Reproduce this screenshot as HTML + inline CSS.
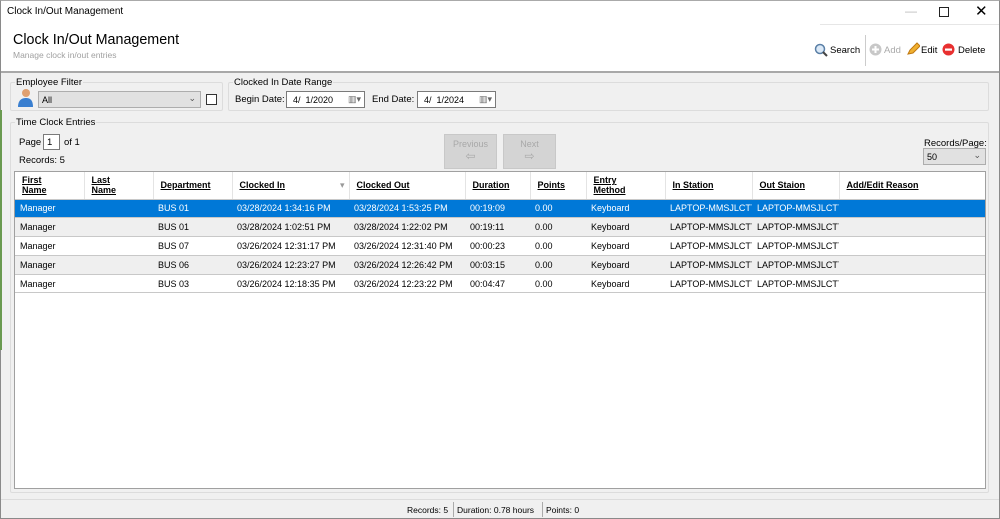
<!DOCTYPE html><html><head><style>
*{box-sizing:border-box;margin:0;padding:0}
body{width:1000px;height:519px;overflow:hidden;font-family:"Liberation Sans",sans-serif;font-size:9.5px;color:#000;background:#f0f0f0;position:relative}
.a{position:absolute}
.win{left:0;top:0;width:1000px;height:519px;border:1px solid #8a8a8a;border-top:1px solid #aaa}
.grp{border:1px solid #dcdcdc;border-radius:2px}
.lbl{font-size:9.5px;background:#f0f0f0;padding:0 1px}
table{border-collapse:collapse;table-layout:fixed;width:970px}
td{height:18.8px;padding:0 0 0 5px;white-space:nowrap;overflow:hidden;font-size:9px;border-bottom:1px solid #c8c8c8}
th{height:27px;text-align:left;font-size:9px;font-weight:bold;text-decoration:underline;padding:0 0 0 7px;border-right:1px solid #e4e4e4;border-bottom:1px solid #c8c8c8;line-height:10px;vertical-align:middle}
tr.s td{background:#0078d7;color:#fff}
tr.g td{background:#efefef}
.btn{background:#d4d4d4;border:1px solid #c8c8c8;color:#a8a8a8;font-size:9px;text-align:center}
</style></head><body>
<div class="a" style="left:0;top:0;width:1000px;height:72px;background:#fff"></div>
<div class="a" style="left:0;top:71px;width:1000px;height:2px;background:#a8a8a8"></div>
<div class="a" style="left:820px;top:24px;width:180px;height:1px;background:#e6e6e6"></div>
<div class="a" style="left:7px;top:6px;font-size:10px">Clock In/Out Management</div>
<div class="a" style="left:905px;top:4px;color:#bbb;font-size:12px">—</div>
<div class="a" style="left:939px;top:7px;width:10px;height:10px;border:1px solid #222"></div>
<div class="a" style="left:975px;top:2px;font-size:15px">✕</div>
<div class="a" style="left:13px;top:32px;font-size:14.3px">Clock In/Out Management</div>
<div class="a" style="left:13px;top:50px;font-size:8.5px;color:#a0a0a0">Manage clock in/out entries</div>
<svg class="a" style="left:814px;top:43px" width="14" height="14"><circle cx="6" cy="6" r="4.5" fill="#dbe9f7" stroke="#5a7fa6" stroke-width="1.5"/><path d="M9 9l4 4" stroke="#444" stroke-width="2"/></svg>
<div class="a" style="left:830px;top:45px;font-size:9.5px">Search</div>
<div class="a" style="left:865px;top:35px;width:1px;height:31px;background:#ccc"></div>
<svg class="a" style="left:869px;top:43px" width="13" height="13"><circle cx="6.5" cy="6.5" r="6" fill="#c8c8c8"/><path d="M6.5 3v7M3 6.5h7" stroke="#fff" stroke-width="2"/></svg>
<div class="a" style="left:884px;top:45px;font-size:9.5px;color:#aaa">Add</div>
<svg class="a" style="left:906px;top:42px" width="14" height="14"><path d="M2 12l2-4 7-7 3 3-7 7z" fill="#f0b030" stroke="#c07810"/></svg>
<div class="a" style="left:921px;top:45px;font-size:9.5px">Edit</div>
<svg class="a" style="left:942px;top:43px" width="13" height="13"><circle cx="6.5" cy="6.5" r="6" fill="#e83030"/><rect x="3" y="5.5" width="7" height="2.2" fill="#fff"/></svg>
<div class="a" style="left:958px;top:45px;font-size:9.5px">Delete</div>

<div class="a grp" style="left:10px;top:82px;width:213px;height:29px"></div>
<div class="a lbl" style="left:15px;top:77px">Employee Filter</div>
<svg class="a" style="left:15px;top:88px" width="20" height="20"><circle cx="11" cy="5" r="4" fill="#e0a070"/><path d="M3 19c0-7 4-9 8-9s7 2 7 9z" fill="#3a7fd0"/></svg>
<div class="a" style="left:38px;top:91px;width:163px;height:17px;background:#e1e1e1;border:1px solid #adadad;padding:3px 3px;font-size:9px">All<span style="position:absolute;right:4px;top:1px;color:#555">⌄</span></div>
<div class="a" style="left:206px;top:94px;width:11px;height:11px;border:1px solid #333;background:#fff"></div>

<div class="a grp" style="left:228px;top:82px;width:761px;height:29px"></div>
<div class="a lbl" style="left:233px;top:77px">Clocked In Date Range</div>
<div class="a" style="left:235px;top:94px">Begin Date:</div>
<div class="a" style="left:286px;top:91px;width:79px;height:17px;background:#fff;border:1px solid #7a7a7a;padding:3px 6px;font-size:9px">4/&nbsp; 1/2020<span style="position:absolute;right:3px;top:2px;color:#666">▥▾</span></div>
<div class="a" style="left:372px;top:94px">End Date:</div>
<div class="a" style="left:417px;top:91px;width:79px;height:17px;background:#fff;border:1px solid #7a7a7a;padding:3px 6px;font-size:9px">4/&nbsp; 1/2024<span style="position:absolute;right:3px;top:2px;color:#666">▥▾</span></div>

<div class="a grp" style="left:10px;top:122px;width:979px;height:371px"></div>
<div class="a lbl" style="left:15px;top:117px">Time Clock Entries</div>
<div class="a" style="left:19px;top:137px">Page</div>
<div class="a" style="left:43px;top:134px;width:17px;height:16px;background:#fff;border:1px solid #7a7a7a;padding:2px 3px">1</div>
<div class="a" style="left:64px;top:137px">of 1</div>
<div class="a" style="left:19px;top:155px">Records: 5</div>
<div class="a btn" style="left:444px;top:134px;width:53px;height:35px;padding-top:4px">Previous<br><span style="font-size:12px">⇦</span></div>
<div class="a btn" style="left:503px;top:134px;width:53px;height:35px;padding-top:4px">Next<br><span style="font-size:12px">⇨</span></div>
<div class="a" style="left:924px;top:138px">Records/Page:</div>
<div class="a" style="left:923px;top:148px;width:63px;height:17px;background:#e1e1e1;border:1px solid #adadad;padding:3px 3px;font-size:9px">50<span style="position:absolute;right:4px;top:1px;color:#555">⌄</span></div>

<div class="a" style="left:14px;top:171px;width:972px;height:318px;background:#fff;border:1px solid #a0a0a0">
<table>
<colgroup><col style="width:69px"><col style="width:69px"><col style="width:79px"><col style="width:117px"><col style="width:116px"><col style="width:65px"><col style="width:56px"><col style="width:79px"><col style="width:87px"><col style="width:87px"><col></colgroup>
<tr><th>First<br>Name</th><th>Last<br>Name</th><th>Department</th><th>Clocked In<span style="float:right;margin-right:4px;color:#999;text-decoration:none;font-weight:normal">▾</span></th><th>Clocked Out</th><th>Duration</th><th>Points</th><th>Entry<br>Method</th><th>In Station</th><th>Out Staion</th><th style="border-right:0">Add/Edit Reason</th></tr>
<tr class="s"><td>Manager</td><td></td><td>BUS 01</td><td>03/28/2024 1:34:16 PM</td><td>03/28/2024 1:53:25 PM</td><td>00:19:09</td><td>0.00</td><td>Keyboard</td><td>LAPTOP-MMSJLCT7</td><td>LAPTOP-MMSJLCT7</td><td></td></tr>
<tr class="g"><td>Manager</td><td></td><td>BUS 01</td><td>03/28/2024 1:02:51 PM</td><td>03/28/2024 1:22:02 PM</td><td>00:19:11</td><td>0.00</td><td>Keyboard</td><td>LAPTOP-MMSJLCT7</td><td>LAPTOP-MMSJLCT7</td><td></td></tr>
<tr><td>Manager</td><td></td><td>BUS 07</td><td>03/26/2024 12:31:17 PM</td><td>03/26/2024 12:31:40 PM</td><td>00:00:23</td><td>0.00</td><td>Keyboard</td><td>LAPTOP-MMSJLCT7</td><td>LAPTOP-MMSJLCT7</td><td></td></tr>
<tr class="g"><td>Manager</td><td></td><td>BUS 06</td><td>03/26/2024 12:23:27 PM</td><td>03/26/2024 12:26:42 PM</td><td>00:03:15</td><td>0.00</td><td>Keyboard</td><td>LAPTOP-MMSJLCT7</td><td>LAPTOP-MMSJLCT7</td><td></td></tr>
<tr><td>Manager</td><td></td><td>BUS 03</td><td>03/26/2024 12:18:35 PM</td><td>03/26/2024 12:23:22 PM</td><td>00:04:47</td><td>0.00</td><td>Keyboard</td><td>LAPTOP-MMSJLCT7</td><td>LAPTOP-MMSJLCT7</td><td></td></tr>
</table></div>

<div class="a" style="left:0;top:499px;width:1000px;height:1px;background:#dcdcdc"></div>
<div class="a" style="left:407px;top:505px;font-size:8.5px">Records: 5</div>
<div class="a" style="left:453px;top:502px;width:1px;height:15px;background:#aaa"></div>
<div class="a" style="left:457px;top:505px;font-size:8.5px">Duration: 0.78 hours</div>
<div class="a" style="left:542px;top:502px;width:1px;height:15px;background:#aaa"></div>
<div class="a" style="left:546px;top:505px;font-size:8.5px">Points: 0</div>
<div class="a win"></div>
<div class="a" style="left:0;top:110px;width:2px;height:240px;background:#6a9a50"></div>
</body></html>
